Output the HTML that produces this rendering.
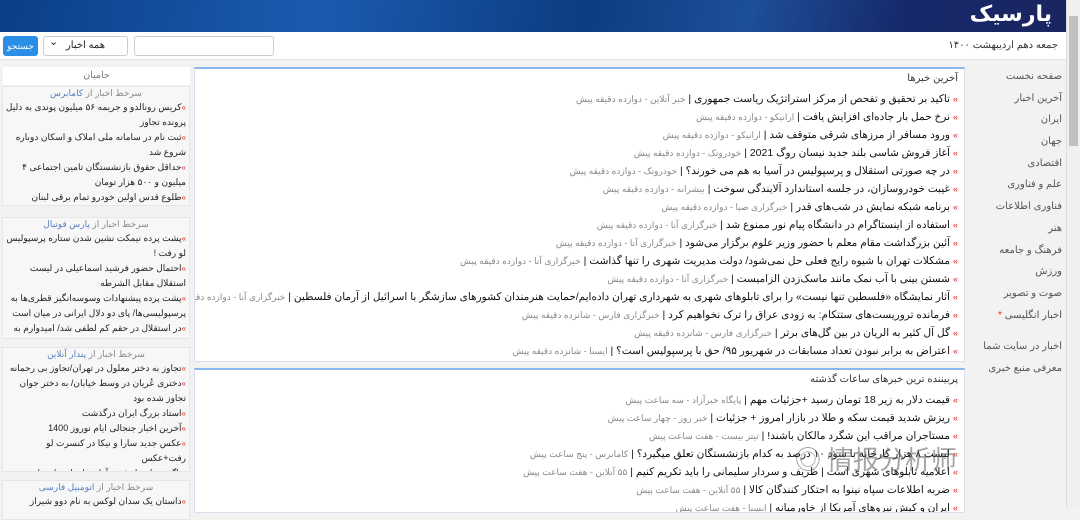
<!DOCTYPE html>
<html><head><meta charset="utf-8"><style>
*{box-sizing:border-box;margin:0;padding:0}
body{width:1080px;height:508px;overflow:hidden;background:#f2f2f2;font-family:"Liberation Sans","Noto Sans CJK SC",sans-serif;direction:rtl;position:relative}
.hdr{position:absolute;left:0;top:0;width:1066px;height:32px;background:linear-gradient(100deg,#0b3f86 0%,#1a5bb0 30%,#0d3c80 55%,#1d4f98 70%,#16286a 85%,#1a2560 100%)}
.logo{position:absolute;right:14px;top:2px;color:#fff;font-size:22px;font-weight:bold;font-family:"DejaVu Sans",sans-serif}
.sb{position:absolute;right:0;top:0;width:14px;height:508px;background:#f0f0f0;border-left:1px solid #ddd}
.sb .th{position:absolute;left:2px;right:2px;top:16px;height:130px;background:#c1c1c1}
.bar{position:absolute;left:0;top:32px;width:1066px;height:28px;background:#fff;border-bottom:1px solid #e4e4e4}
.date{position:absolute;right:8px;top:8px;font-size:10px;color:#333}
.inp{position:absolute;left:134px;top:4px;width:140px;height:20px;border:1px solid #ccc;border-radius:3px}
.sel{position:absolute;left:43px;top:4px;width:85px;height:20px;border:1px solid #ccc;border-radius:3px;font-size:10px;padding:3px 22px 0 0;color:#222}
.sel:after{content:"⌄";position:absolute;left:5px;top:-2px;font-size:11px}
.btn{position:absolute;left:3px;top:4px;width:35px;height:20px;background:#2a8ee6;border-radius:3px;color:#fff;font-size:9px;text-align:center;line-height:20px}
.nav{position:absolute;right:14px;top:70px;width:96px;font-size:10px;color:#555}
.nav div{height:21.7px;line-height:14px;padding-right:4px;white-space:nowrap}
.box{position:absolute;left:194px;width:771px;background:#fff;border:1px solid #dde;border-top:2px solid #8ab8ea;overflow:hidden}
.box h3{font-size:10px;font-weight:normal;color:#333;padding:4px 6px;height:21px}
.it{font-size:10.5px;color:#111;height:18px;line-height:18px;padding-right:6px;white-space:nowrap}
.it:before{content:"»";color:#e2252a;margin-left:3px;font-size:9px}
.it span{color:#888;font-size:9px}
.lc{position:absolute;left:2px;width:188px;background:#f7f7f7;border:1px solid #e6e6e6;font-size:9px;color:#222;overflow:hidden}
.lc .t{text-align:center;color:#5a7ec0;font-size:9px;height:13px;line-height:12px}
.lc .t b{font-weight:normal;color:#888}
.lc p{line-height:15px;padding-right:3px}
.lc p:before{content:"»";color:#e2252a;font-size:8px}
.wm{position:absolute;left:795px;top:440px;font-size:26px;color:rgba(90,90,90,.55);font-family:"Noto Sans CJK SC",sans-serif;direction:ltr}
</style></head><body>
<div class="hdr"><div class="logo">پارسیک</div></div>
<div class="sb"><div class="th"></div></div>
<div class="bar"><div class="date">جمعه دهم اردیبهشت ۱۴۰۰</div><div class="inp"></div><div class="sel">همه اخبار</div><div class="btn">جستجو</div></div>
<div class="nav"><div>صفحه نخست</div><div>آخرین اخبار</div><div>ایران</div><div>جهان</div><div>اقتصادی</div><div>علم و فناوری</div><div>فناوری اطلاعات</div><div>هنر</div><div>فرهنگ و جامعه</div><div>ورزش</div><div>صوت و تصویر</div><div>اخبار انگلیسی <span style="color:#e22">*</span></div><div style="margin-top:10px">اخبار در سایت شما</div><div>معرفی منبع خبری</div></div>
<div class="box" style="top:67px;height:295px"><h3>آخرین خبرها</h3>
<div class="it">تاکید بر تحقیق و تفحص از مرکز استراتژیک ریاست جمهوری | <span>خبر آنلاین - دوازده دقیقه پیش</span></div>
<div class="it">نرخ حمل بار جاده‌ای افزایش یافت | <span>ارانیکو - دوازده دقیقه پیش</span></div>
<div class="it">ورود مسافر از مرزهای شرقی متوقف شد | <span>ارانیکو - دوازده دقیقه پیش</span></div>
<div class="it">آغاز فروش شاسی بلند جدید نیسان روگ 2021 | <span>خودروتک - دوازده دقیقه پیش</span></div>
<div class="it">در چه صورتی استقلال و پرسپولیس در آسیا به هم می خورند؟ | <span>خودروتک - دوازده دقیقه پیش</span></div>
<div class="it">غیبت خودروسازان، در جلسه استاندارد آلایندگی سوخت | <span>بیشرانه - دوازده دقیقه پیش</span></div>
<div class="it">برنامه شبکه نمایش در شب‌های قدر | <span>خبرگزاری صبا - دوازده دقیقه پیش</span></div>
<div class="it">استفاده از اینستاگرام در دانشگاه پیام نور ممنوع شد | <span>خبرگزاری آنا - دوازده دقیقه پیش</span></div>
<div class="it">آئین بزرگداشت مقام معلم با حضور وزیر علوم برگزار می‌شود | <span>خبرگزاری آنا - دوازده دقیقه پیش</span></div>
<div class="it">مشکلات تهران با شیوه رایج فعلی حل نمی‌شود/ دولت مدیریت شهری را تنها گذاشت | <span>خبرگزاری آنا - دوازده دقیقه پیش</span></div>
<div class="it">شستن بینی با آب نمک مانند ماسک‌زدن الزامیست | <span>خبرگزاری آنا - دوازده دقیقه پیش</span></div>
<div class="it">آثار نمایشگاه «فلسطین تنها نیست» را برای تابلوهای شهری به شهرداری تهران داده‌ایم/حمایت هنرمندان کشورهای سازشگر با اسرائیل از آرمان فلسطین | <span>خبرگزاری آنا - دوازده دقیقه پیش</span></div>
<div class="it">فرمانده تروریست‌های ستتکام: به زودی عراق را ترک نخواهیم کرد | <span>خبرگزاری فارس - شانزده دقیقه پیش</span></div>
<div class="it">گل آل کثیر به الریان در بین گل‌های برتر | <span>خبرگزاری فارس - شانزده دقیقه پیش</span></div>
<div class="it">اعتراض به برابر نبودن تعداد مسابقات در شهریور ۹۵/ حق با پرسپولیس است؟ | <span>ایسنا - شانزده دقیقه پیش</span></div>
</div>
<div class="box" style="top:368px;height:145px"><h3>پربیننده ترین خبرهای ساعات گذشته</h3>
<div class="it">قیمت دلار به زیر 18 تومان رسید +جزئیات مهم | <span>پایگاه خبرآزاد - سه ساعت پیش</span></div>
<div class="it">ریزش شدید قیمت سکه و طلا در بازار امروز + جزئیات | <span>خبر روز - چهار ساعت پیش</span></div>
<div class="it">مستاجران مراقب این شگرد مالکان باشند! | <span>تیتر بیست - هفت ساعت پیش</span></div>
<div class="it">لیست ۸ هزار کارخانه با سود ۱۰ درصد به کدام بازنشستگان تعلق میگیرد؟ | <span>کامابرس - پنج ساعت پیش</span></div>
<div class="it">اعلامیه تابلوهای شهری است | ظریف و سردار سلیمانی را باید تکریم کنیم | <span>۵۵ آنلاین - هفت ساعت پیش</span></div>
<div class="it">ضربه اطلاعات سپاه نینوا به احتکار کنندگان کالا | <span>۵۵ آنلاین - هفت ساعت پیش</span></div>
<div class="it">ایران و کیش نیروهای آمریکا از خاورمیانه | <span>ایسنا - هفت ساعت پیش</span></div>
</div>
<div style="position:absolute;left:3px;top:67px;width:187px;height:18px;background:#fff;font-size:9.5px;color:#777;text-align:center;line-height:18px">حامیان</div>
<div class="lc" style="top:86px;height:120px"><div class="t"><b>سرخط اخبار از </b>کامابرس</div>
<p>کریس رونالدو و جریمه ۵۶ میلیون پوندی به دلیل پرونده تجاوز</p><p>ثبت نام در سامانه ملی املاک و اسکان دوباره شروع شد</p><p>حداقل حقوق بازنشستگان تامین اجتماعی ۴ میلیون و ۵۰۰ هزار تومان</p><p>طلوع قدس اولین خودرو تمام برقی لبنان رونمایی</p></div>
<div class="lc" style="top:217px;height:122px"><div class="t"><b>سرخط اخبار از </b>پارس فوتبال</div>
<p>پشت پرده نیمکت نشین شدن ستاره پرسپولیس لو رفت !</p><p>احتمال حضور فرشید اسماعیلی در لیست استقلال مقابل الشرطه</p><p>پشت پرده پیشنهادات وسوسه‌انگیز قطری‌ها به پرسپولیسی‌ها/ پای دو دلال ایرانی در میان است</p><p>در استقلال در حقم کم لطفی شد/ امیدوارم به</p></div>
<div class="lc" style="top:347px;height:125px"><div class="t"><b>سرخط اخبار از </b>پندار آنلاین</div>
<p>تجاوز به دختر معلول در تهران/تجاوز بی رحمانه</p><p>دختری عُریان در وسط خیابان/ به دختر جوان تجاوز شده بود</p><p>استاد بزرگ ایران درگذشت</p><p>آخرین اخبار جنجالی ایام نوروز 1400</p><p>عکس جدید سارا و نیکا در کنسرت لو رفت+عکس</p><p>ناگفته هایی از فوت آزاده نامداری از زبان دادسری</p></div>
<div class="lc" style="top:480px;height:40px"><div class="t"><b>سرخط اخبار از </b>اتومبیل فارسی</div><p>داستان یک سدان لوکس به نام دوو شیراز</p></div>
<div class="wm">◎ 情报分析师</div>
</body></html>
